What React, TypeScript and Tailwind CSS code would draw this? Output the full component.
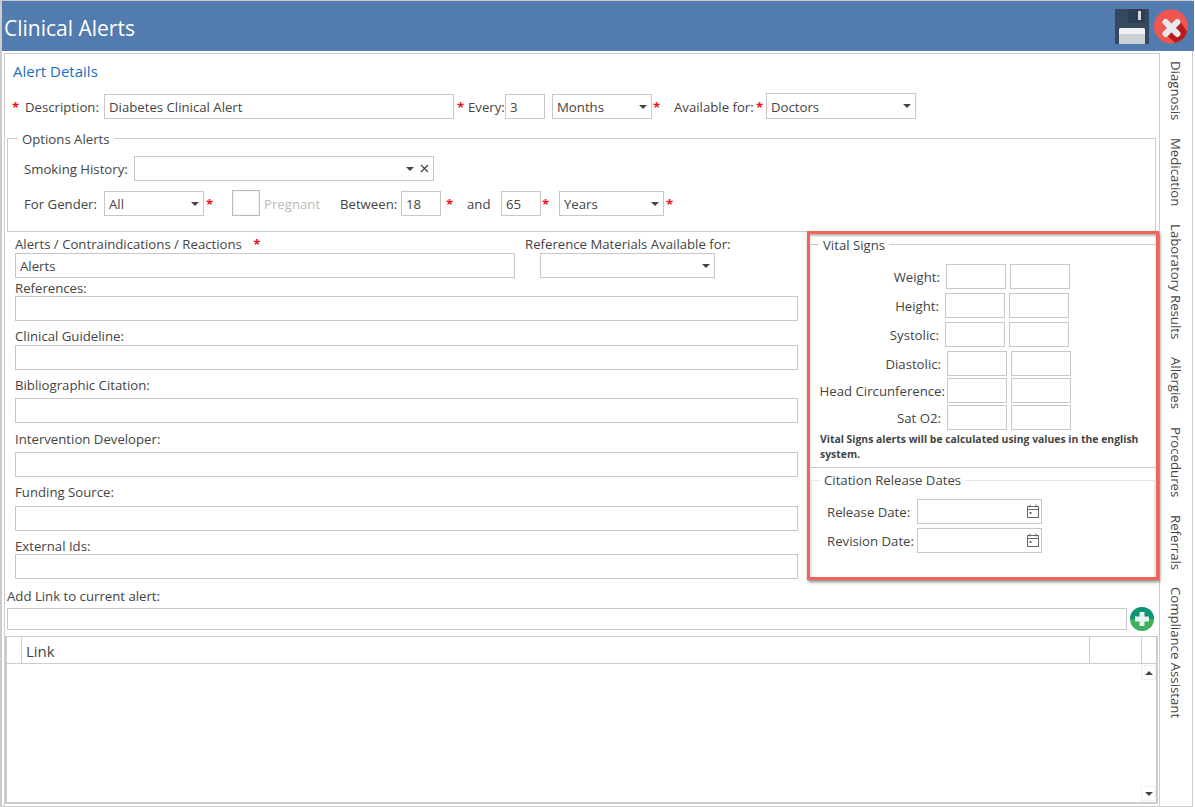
import type { ReactNode } from 'react'

const Req = ({ className = '' }: { className?: string }) => (
  <span className={`pt-[2px] font-bold text-[#e8141c] leading-none ${className}`}>*</span>
)

function Box({ className = '', value = '' }: { className?: string; value?: string }) {
  return (
    <input
      readOnly
      value={value}
      className={`block h-[25px] shrink-0 border border-[#c8c8c8] bg-white px-[4px] pt-[1px] text-[#444] outline-none ${className}`}
    />
  )
}

function Caret({ className = '' }: { className?: string }) {
  return (
    <svg className={`h-[4px] w-[8px] shrink-0 ${className}`} viewBox="0 0 8 4">
      <path d="M0 0h8L4 4z" fill="#444" />
    </svg>
  )
}

function Select({ className = '', value = '' }: { className?: string; value?: string }) {
  return (
    <div className={`flex h-[25px] shrink-0 items-center justify-between border border-[#c8c8c8] bg-white pl-[4px] pr-[4px] ${className}`}>
      <span className="pt-[3px]">{value}</span>
      <Caret />
    </div>
  )
}

function CalendarIcon() {
  return (
    <svg className="h-[15px] w-[14px]" viewBox="0 0 14 15" fill="none" stroke="#666" strokeWidth="1">
      <rect x="1.5" y="2.5" width="11" height="11" />
      <path d="M1.5 5.5h11M4 .5v3M10 .5v3" />
      <rect x="3.5" y="8" width="2" height="2" fill="#666" stroke="none" />
    </svg>
  )
}

function DateField({ label }: { label: string }) {
  return (
    <div className="flex items-center">
      <span className="w-[105px] pl-[15px] pt-[2px]">{label}</span>
      <div className="flex h-[25px] w-[125px] items-center justify-end border border-[#c8c8c8] pr-[1px]">
        <CalendarIcon />
      </div>
    </div>
  )
}

function Field({ label, labelClass, boxClass }: { label: string; labelClass: string; boxClass: string }) {
  return (
    <>
      <div className={`h-[18px] ${labelClass}`}>{label}</div>
      <Box className={`w-[783px] ${boxClass}`} />
    </>
  )
}

const vitals = [
  { label: 'Weight:', width: 'w-[136px] pr-[6px]', row: 'mt-[11px]' },
  { label: 'Height:', width: 'w-[135px] pr-[6px]', row: 'mt-[4px]' },
  { label: 'Systolic:', width: 'w-[135px] pr-[6px]', row: 'mt-[4px]' },
  { label: 'Diastolic:', width: 'w-[137px] pr-[6px]', row: 'mt-[4px]' },
  { label: 'Head Circunference:', width: 'w-[137px] pr-[2px]', row: 'mt-[2px]' },
  { label: 'Sat O2:', width: 'w-[137px] pr-[6px]', row: 'mt-[2px]' },
]

const tabs = ['Diagnosis', 'Medication', 'Laboratory Results', 'Allergies', 'Procedures', 'Referrals', 'Compliance Assistant']

function Row({ className = '', children }: { className?: string; children: ReactNode }) {
  return <div className={`flex items-center ${className}`}>{children}</div>
}

export default function App() {
  return (
    <div className="h-[807px] w-[1193px] border-t border-r border-b border-l-2 border-[#ccc] bg-white font-['Open_Sans',sans-serif] text-[13.2px] text-[#444]">
      {/* Title bar */}
      <header className="-mr-[2px] flex h-[50px] items-center justify-between bg-[#527bb0] pl-[2px] pr-[6px]">
        <h1 className="pt-[6px] text-[21px] text-white">Clinical Alerts</h1>
        <div className="flex items-center gap-[5px]">
          <svg className="h-[35px] w-[34px]" viewBox="0 0 34 35">
            <path d="M0 0h34v35H0z" fill="#34495e" />
            <path d="M13 0h17v14H13z" fill="#2c3e50" />
            <path d="M23 2h3v9h-3z" fill="#d5dade" />
            <path d="M4 21q0-2 2-2h22q2 0 2 2v14H4z" fill="#ccd1d6" />
            <path d="M4 21q0-2 2-2h22q2 0 2 2v4H4z" fill="#eef0f2" />
          </svg>
          <svg className="h-[35px] w-[34px]" viewBox="0 0 35 35">
            <circle cx="17.5" cy="17.5" r="17.5" fill="#f1564e" />
            <path d="M25 9L34 23A17.500 17.500 0 0 1 22 34.500L10 24z" fill="#b71c1c" />
            <path d="M12 13l12 12M24 13L12 25" stroke="#e8e9ec" strokeWidth="6.5" strokeLinecap="round" />
          </svg>
        </div>
      </header>

      <div className="flex pt-[2px]">
        {/* Main panel */}
        <main className="ml-[2px] h-[753px] w-[1156px] shrink-0 border border-b-0 border-[#ccc]">
          <div className="h-[40px] pl-[8px] pt-[7px] text-[15px] leading-[20px] text-[#1a6fc0]">Alert Details</div>

          <Row className="h-[25px] pl-[7px]">
            <Req className="w-[13px]" />
            <span className="w-[79px] pt-[2px]">Description:</span>
            <Box className="w-[350px]" value="Diabetes Clinical Alert" />
            <Req className="ml-[3px] w-[11px]" />
            <span className="w-[37px] pt-[2px]">Every:</span>
            <Box className="w-[40px]" value="3" />
            <Select className="ml-[7px] w-[100px]" value="Months" />
            <Req className="ml-px w-[21px]" />
            <span className="w-[82px] pt-[2px]">Available for:</span>
            <Req className="w-[10px]" />
            <Select className="-mt-[1px] !h-[26px] w-[150px]" value="Doctors" />
          </Row>

          <fieldset className="ml-[2px] mt-[10px] w-[1149px] border border-[#ccc] pb-[15px]">
            <legend className="ml-[10px] h-[18px] px-[4px] leading-[20px]">Options Alerts</legend>
            <Row className="mt-[9px] pl-[16px]">
              <span className="w-[110px] pt-[2px]">Smoking History:</span>
              <div className="flex h-[25px] w-[300px] items-center justify-end gap-[6px] border border-[#c8c8c8] pr-[4px]">
                <Caret />
                <svg className="h-[9px] w-[9px]" viewBox="0 0 9 9">
                  <path d="M1 1l7 7M8 1L1 8" stroke="#444" strokeWidth="1.3" />
                </svg>
              </div>
            </Row>
            <Row className="mt-[10px] pl-[16px]">
              <span className="w-[80px] pt-[2px]">For Gender:</span>
              <Select className="w-[100px]" value="All" />
              <Req className="ml-[2px] w-[26px]" />
              <div className="-mt-[1px] h-[26px] w-[28px] shrink-0 border border-[#bbb] shadow-[inset_0_0_2px_#ddd]" />
              <span className="ml-[4px] w-[76px] pt-[2px] text-[#bbb]">Pregnant</span>
              <span className="w-[61px] pt-[2px]">Between:</span>
              <Box className="w-[40px]" value="18" />
              <Req className="ml-[5px] w-[21px]" />
              <span className="w-[34px] pt-[2px]">and</span>
              <Box className="w-[40px]" value="65" />
              <Req className="ml-px w-[17px]" />
              <Select className="w-[105px]" value="Years" />
              <Req className="ml-[2px]" />
            </Row>
          </fieldset>

          <div className="flex">
            <div className="ml-[10px] w-[783px] shrink-0">
              <div className="mt-[3px] flex">
                <div className="w-[500px]">
                  <div className="h-[18px] whitespace-nowrap leading-[18px]">
                    Alerts / Contraindications / Reactions <Req className="ml-[8px]" />
                  </div>
                  <Box className="w-[500px]" value="Alerts" />
                </div>
                <div className="ml-[10px]">
                  <div className="h-[18px] leading-[18px]">Reference Materials Available for:</div>
                  <Select className="ml-[15px] w-[175px]" />
                </div>
              </div>
              <Field label="References:" labelClass="leading-[20px]" boxClass="" />
              <Field label="Clinical Guideline:" labelClass="mt-[6px] leading-[18px]" boxClass="" />
              <Field label="Bibliographic Citation:" labelClass="mt-[6px] leading-[18px]" boxClass="mt-[4px]" />
              <Field label="Intervention Developer:" labelClass="mt-[7px] leading-[18px]" boxClass="mt-[4px]" />
              <Field label="Funding Source:" labelClass="mt-[6px] leading-[18px]" boxClass="mt-[5px]" />
              <Field label="External Ids:" labelClass="mt-[5px] leading-[20px]" boxClass="" />
            </div>

            {/* Highlighted vitals block */}
            <section className="relative z-10 -mt-[1px] ml-[9px] h-[349px] w-[352px] shrink-0 border-[3px] border-[#f0645a] bg-white shadow-[1px_2px_3px_rgba(60,60,60,0.6),inset_0_2px_2px_rgba(60,60,60,0.35)]">
              <fieldset className="mt-px border-t border-[#ccc]">
                <legend className="ml-[9px] h-[18px] px-[4px] leading-[20px]">Vital Signs</legend>
                {vitals.map((v) => (
                  <Row key={v.label} className={v.row}>
                    <span className={`${v.width} shrink-0 whitespace-nowrap pt-[3px] text-right`}>{v.label}</span>
                    <Box className="w-[60px]" />
                    <Box className="ml-[4px] w-[60px]" />
                  </Row>
                ))}
                <p className="ml-[10px] mt-[2px] w-[330px] text-[10.4px] font-bold leading-[15px]">
                  Vital Signs alerts will be calculated using values in the english system.
                </p>
              </fieldset>
              <div className="mt-[5px] border-t border-[#ccc]" />
              <fieldset className="ml-px mr-px mt-[3px] h-[106px] border border-b-0 border-[#e5e5e5]">
                <legend className="ml-[8px] h-[18px] px-[4px] leading-[18px]">Citation Release Dates</legend>
                <div className="mt-[10px]">
                  <DateField label="Release Date:" />
                </div>
                <div className="mt-[4px]">
                  <DateField label="Revision Date:" />
                </div>
              </fieldset>
            </section>
          </div>

          <div className="ml-[2px] mt-[7px] h-[18px] leading-[18px]">Add Link to current alert:</div>
          <Row className="ml-[2px] mt-[2px] h-[24px]">
            <Box className="!h-[22px] w-[1120px]" />
            <svg className="ml-[3px] h-[24px] w-[24px]" viewBox="0 0 24 24">
              <circle cx="12" cy="12" r="12" fill="#3fb05e" />
              <path d="M0 12a12 12 0 0 1 24 0z" fill="#0d9477" />
              <path d="M9.500 5h5v4.500H19v5h-4.500V19h-5v-4.500H5v-5h4.500z" fill="#e6f3ec" />
            </svg>
          </Row>

          <div className="mt-[5px] h-[168px] w-[1153px] border-t border-b-2 border-l-2 border-r-2 border-[#ccc]">
            <div className="flex h-[27px] border-b border-[#ccc]">
              <div className="w-[15px] border-r border-[#ccc]" />
              <div className="w-[1068px] border-r border-[#ccc] pl-[4px] text-[15px] leading-[28px]">Link</div>
              <div className="w-[52px] border-r border-[#ccc]" />
            </div>
            <div className="flex h-[138px] flex-col items-end justify-between pb-px pt-px">
              <div className="flex h-[15px] w-[15px] items-center justify-center border border-[#eee]">
                <Caret className="rotate-180" />
              </div>
              <div className="flex h-[15px] w-[15px] items-center justify-center border border-[#eee]">
                <Caret />
              </div>
            </div>
          </div>
        </main>

        {/* Vertical tabs */}
        <nav className="flex w-[31px] flex-col items-center gap-[17.7px] pt-[8px]">
          {tabs.map((t) => (
            <span key={t} className="whitespace-nowrap leading-[18px] [writing-mode:vertical-rl]">
              {t}
            </span>
          ))}
        </nav>
      </div>
    </div>
  )
}
